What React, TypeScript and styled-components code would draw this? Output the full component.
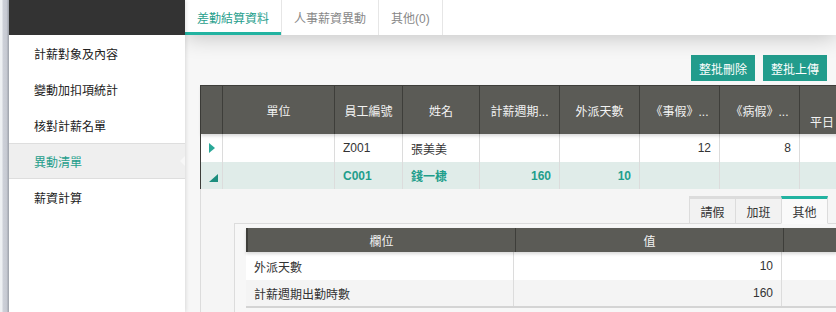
import styled, { createGlobalStyle } from 'styled-components'

const GlobalStyle = createGlobalStyle`
  html, body {
    margin: 0;
    padding: 0;
    background: #f7f7f7;
    font-family: "Liberation Sans", "Noto Sans CJK TC", sans-serif;
    font-size: 12px;
  }
`

const teal = '#1f9e8c'
const tealBright = '#22b3a1'

const mainCols = [22, 112, 68, 77, 80, 80, 80, 80, 80]
const detailCols = [268, 268, 100]

const sideItems = ['計薪對象及內容', '變動加扣項統計', '核對計薪名單', '異動清單', '薪資計算']
const topTabs = ['差勤結算資料', '人事薪資異動', '其他(0)']

type Row = {
  id: string
  name: string
  period: string
  days: string
  leave: string
  sick: string
  open?: boolean
}

const rows: Row[] = [
  { id: 'Z001', name: '張美美', period: '', days: '', leave: '12', sick: '8' },
  { id: 'C001', name: '錢一棣', period: '160', days: '10', leave: '', sick: '', open: true },
]

export default function App() {
  return (
    <>
      <GlobalStyle />
      <Page>
        <Strip />
        <Sidebar>
          <SideHead />
          {sideItems.map((item) => (
            <SideItem key={item} $active={item === '異動清單'}>
              {item}
            </SideItem>
          ))}
        </Sidebar>
        <Main>
          <TabBar>
            {topTabs.map((t, i) => (
              <TopTab key={t} $active={i === 0}>
                {t}
              </TopTab>
            ))}
          </TabBar>
          <Content>
            <Actions>
              <ActionButton>整批刪除</ActionButton>
              <ActionButton>整批上傳</ActionButton>
            </Actions>
            <Grid>
              <HeadRow $cols={mainCols}>
                <HeadCell />
                <HeadCell>單位</HeadCell>
                <HeadCell>員工編號</HeadCell>
                <HeadCell>姓名</HeadCell>
                <HeadCell>計薪週期...</HeadCell>
                <HeadCell>外派天數</HeadCell>
                <HeadCell>《事假》...</HeadCell>
                <HeadCell>《病假》...</HeadCell>
                <HeadCell $low>平日</HeadCell>
              </HeadRow>
              {rows.map((r) => (
                <BodyRow key={r.id} $cols={mainCols} $open={r.open}>
                  <Cell>{r.open ? <CornerArrow /> : <RightArrow />}</Cell>
                  <Cell />
                  <Cell>{r.id}</Cell>
                  <Cell>{r.name}</Cell>
                  <Cell $num>{r.period}</Cell>
                  <Cell $num>{r.days}</Cell>
                  <Cell $num>{r.leave}</Cell>
                  <Cell $num>{r.sick}</Cell>
                  <Cell />
                </BodyRow>
              ))}
              <Detail>
                <SubTabs>
                  <SubTab>請假</SubTab>
                  <SubTab>加班</SubTab>
                  <SubTab $active>其他</SubTab>
                </SubTabs>
                <Panel>
                  <DetailHead $cols={detailCols}>
                    <HeadCell>欄位</HeadCell>
                    <HeadCell>值</HeadCell>
                    <HeadCell />
                  </DetailHead>
                  <DetailRow $cols={detailCols}>
                    <Cell>外派天數</Cell>
                    <Cell $num>10</Cell>
                    <Cell />
                  </DetailRow>
                  <DetailRow $cols={detailCols} $alt>
                    <Cell>計薪週期出勤時數</Cell>
                    <Cell $num>160</Cell>
                    <Cell />
                  </DetailRow>
                </Panel>
              </Detail>
            </Grid>
          </Content>
        </Main>
      </Page>
    </>
  )
}

const Page = styled.div`
  display: flex;
  width: 836px;
  height: 312px;
  overflow: hidden;
`

const Strip = styled.div`
  width: 9px;
  flex: none;
  background: linear-gradient(to right, #eef0f3 0, #eef0f3 2px, #cdd0d8 3px, #c6c9d2 7px, #a9adb6 8px, #a9adb6 9px);
`

const Sidebar = styled.nav`
  width: 176px;
  flex: none;
  background: #fff;
  position: relative;
  z-index: 2;
  box-shadow: 1px 0 4px rgba(0, 0, 0, 0.12);
`

const SideHead = styled.div`
  height: 35px;
  background: #333;
`

const SideItem = styled.div<{ $active?: boolean }>`
  position: relative;
  height: 36px;
  box-sizing: border-box;
  display: flex;
  align-items: center;
  padding-left: 25px;
  font-size: 12px;
  color: ${(p) => (p.$active ? teal : '#222')};
  background: ${(p) => (p.$active ? '#efefef' : '#fff')};
  border-top: 1px solid ${(p) => (p.$active ? '#dedede' : 'transparent')};
  border-bottom: 1px solid ${(p) => (p.$active ? '#dedede' : 'transparent')};

  &::after {
    content: '';
    display: ${(p) => (p.$active ? 'block' : 'none')};
    position: absolute;
    right: 0;
    top: 12px;
    border: 5px solid transparent;
    border-right-color: #f7f7f7;
  }
`

const Main = styled.main`
  flex: 1;
  min-width: 0;
  display: flex;
  flex-direction: column;
  background: #f7f7f7;
`

const TabBar = styled.div`
  height: 35px;
  flex: none;
  display: flex;
  background: #fff;
  position: relative;
  z-index: 1;
  box-shadow: 0 2px 22px rgba(0, 0, 0, 0.22);
`

const TopTab = styled.div<{ $active?: boolean }>`
  display: flex;
  align-items: center;
  padding: 0 12px;
  font-size: 12px;
  color: ${(p) => (p.$active ? teal : '#888')};
  border-right: 1px solid #e6e6e6;
  box-shadow: ${(p) => (p.$active ? `inset 0 -3px 0 ${tealBright}` : 'none')};
`

const Content = styled.div`
  flex: 1;
  min-height: 0;
  padding: 20px 0 0 15px;
  overflow: hidden;
`

const Actions = styled.div`
  display: flex;
  justify-content: flex-end;
  gap: 8px;
  padding-right: 9px;
  margin-bottom: 4px;
`

const ActionButton = styled.button`
  height: 26px;
  width: 64px;
  border: none;
  padding: 0;
  background: #229c8c;
  color: #fff;
  font-family: inherit;
  font-size: 12px;
`

const Grid = styled.div`
  border-left: 1px solid #3e3e3a;
  width: 700px;
`

const cols = (c: number[]) => c.map((w) => `${w}px`).join(' ')

const HeadRow = styled.div<{ $cols: number[] }>`
  display: grid;
  grid-template-columns: ${(p) => cols(p.$cols)};
  height: 49px;
  background: #5b5b56;
  border-top: 1px solid #3e3e3a;
  box-sizing: border-box;
  box-shadow: 0 2px 3px rgba(0, 0, 0, 0.15);
  position: relative;
`

const HeadCell = styled.div<{ $low?: boolean }>`
  display: flex;
  align-items: ${(p) => (p.$low ? 'flex-end' : 'center')};
  justify-content: ${(p) => (p.$low ? 'flex-start' : 'center')};
  padding: ${(p) => (p.$low ? '0 0 4px 10px' : '0')};
  color: #f2f2f2;
  font-size: 12px;
  white-space: nowrap;
  overflow: hidden;
  border-right: 1px solid #3e3e3a;
`

const BodyRow = styled.div<{ $cols: number[]; $open?: boolean }>`
  display: grid;
  grid-template-columns: ${(p) => cols(p.$cols)};
  height: ${(p) => (p.$open ? 27 : 28)}px;
  background: ${(p) => (p.$open ? '#e0ece9' : '#fff')};
  color: ${(p) => (p.$open ? teal : '#333')};
  font-weight: ${(p) => (p.$open ? 'bold' : 'normal')};
`

const Cell = styled.div<{ $num?: boolean }>`
  display: flex;
  align-items: center;
  justify-content: ${(p) => (p.$num ? 'flex-end' : 'flex-start')};
  padding: 0 8px;
  font-size: 12px;
  border-right: 1px solid #dcdcdc;
  white-space: nowrap;
  overflow: hidden;
`

const RightArrow = styled.span`
  width: 0;
  height: 0;
  border-top: 5px solid transparent;
  border-bottom: 5px solid transparent;
  border-left: 6px solid #2aa898;
`

const CornerArrow = styled.span`
  width: 0;
  height: 0;
  margin-top: 4px;
  border-left: 9px solid transparent;
  border-bottom: 8px solid #1c8e7e;
`

const Detail = styled.div`
  background: #f5f5f5;
  padding-top: 7px;
  border-left: 1px solid #dcdcdc;
  margin-left: -1px;
  height: 130px;
  width: 636px;
`

const SubTabs = styled.div`
  display: flex;
  justify-content: flex-end;
  padding-right: 9px;
  position: relative;
  z-index: 1;
`

const SubTab = styled.div<{ $active?: boolean }>`
  width: 47px;
  height: 28px;
  box-sizing: border-box;
  display: flex;
  align-items: center;
  justify-content: center;
  font-size: 12px;
  color: #333;
  background: ${(p) => (p.$active ? '#fafafa' : '#f2f2f2')};
  border: 1px solid #dcdcdc;
  border-top: 3px solid ${(p) => (p.$active ? tealBright : '#dcdcdc')};
  border-bottom: ${(p) => (p.$active ? '1px solid #fafafa' : '1px solid #dcdcdc')};
  margin-left: -1px;
`

const Panel = styled.div`
  margin: -1px 0 0 33px;
  padding: 4px 0 0 11px;
  background: #f7f7f7;
  border: 1px solid #dcdcdc;
  border-right: none;
  height: 100px;
`

const DetailHead = styled.div<{ $cols: number[] }>`
  display: grid;
  grid-template-columns: ${(p) => cols(p.$cols)};
  height: 24px;
  background: #5b5b56;
  border-left: 2px solid #3e3e3a;
  box-shadow: 0 2px 3px rgba(0, 0, 0, 0.15);
  position: relative;
`

const DetailRow = styled.div<{ $cols: number[]; $alt?: boolean }>`
  display: grid;
  grid-template-columns: ${(p) => cols(p.$cols)};
  height: 28px;
  color: #333;
  background: ${(p) => (p.$alt ? '#f4f4f4' : '#fff')};
  border-bottom: ${(p) => (p.$alt ? '2px solid #d4d4d4' : 'none')};
  box-sizing: border-box;
`
